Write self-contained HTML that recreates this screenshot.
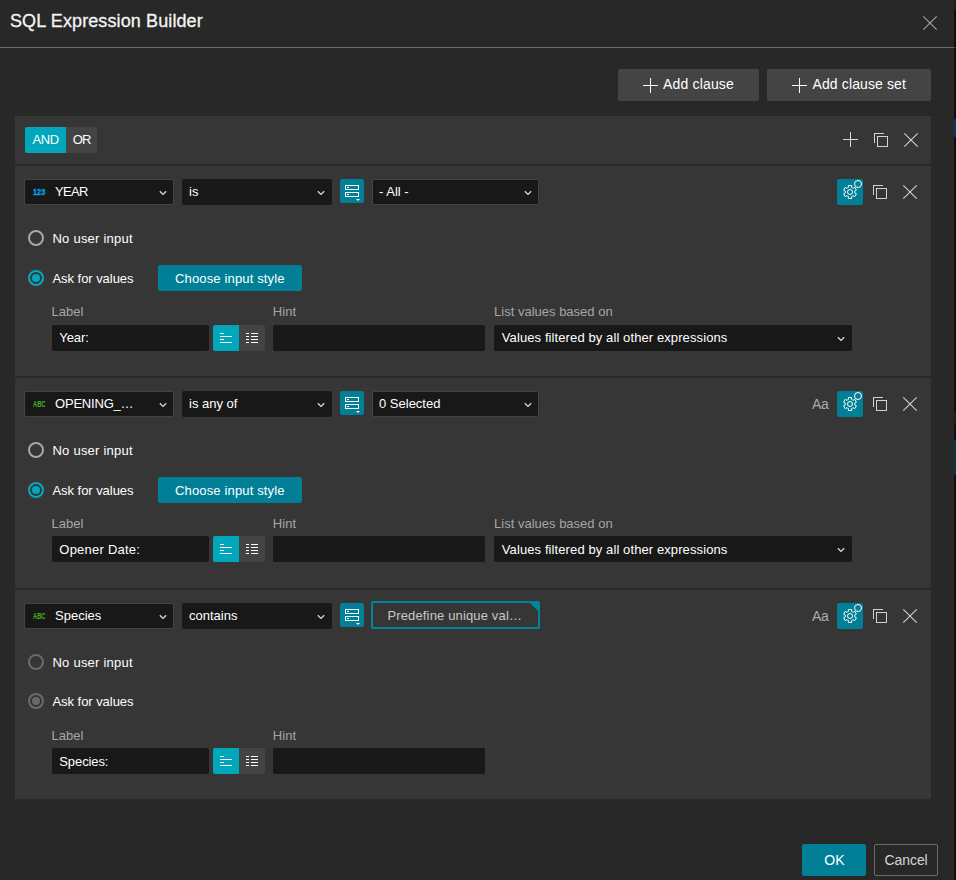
<!DOCTYPE html>
<html lang="en"><head><meta charset="utf-8"><title>SQL Expression Builder</title>
<style>
html,body{margin:0;padding:0}
body{width:956px;height:880px;position:relative;overflow:hidden;background:#151515;font-family:"Liberation Sans",sans-serif}
.b{position:absolute;box-sizing:content-box}
.t{position:absolute;white-space:nowrap}
.i{position:absolute;overflow:visible}
</style></head><body>
<div class="b" style="left:0px;top:0px;width:954px;height:880px;background:#282828;"></div>
<div class="b" style="left:954px;top:0px;width:2px;height:880px;background:#0f0f0f;"></div>
<div class="b" style="left:954px;top:0px;width:2px;height:10px;background:#1e1e1e;"></div>
<div class="b" style="left:954px;top:47px;width:2px;height:1px;background:#3a3a3a;"></div>
<div class="b" style="left:954px;top:119px;width:2px;height:18px;background:#003a5c;"></div>
<div class="b" style="left:954px;top:412px;width:2px;height:13px;background:#1c1c1c;"></div>
<div class="b" style="left:954px;top:440px;width:2px;height:35px;background:#0a3640;"></div>
<div class="t" style="left:10px;top:10px;font-size:18px;line-height:22px;color:#f4f4f4;letter-spacing:0.11px;-webkit-text-stroke:0.3px #f4f4f4;">SQL Expression Builder</div>
<svg class="i" style="left:923px;top:16px" width="14" height="14" viewBox="0 0 14 14"><path d="M0.3 0.3 L13.7 13.7 M13.7 0.3 L0.3 13.7" fill="none" stroke="#a6a6a6" stroke-width="1.1"/></svg>
<div class="b" style="left:0px;top:47px;width:954px;height:1px;background:#6a6a6a;"></div>
<div class="b" style="left:618px;top:69px;width:141px;height:32px;background:#444;border-radius:2px;"></div>
<svg class="i" style="left:643px;top:78px" width="15" height="15" viewBox="0 0 15 15" shape-rendering="crispEdges"><path d="M0 7.5 H15 M7.5 0 V15" fill="none" stroke="#fff" stroke-width="1"/></svg>
<div class="t" style="left:663px;top:75px;font-size:14px;line-height:18px;color:#fff;letter-spacing:0.17px;">Add clause</div>
<div class="b" style="left:767px;top:69px;width:164px;height:32px;background:#444;border-radius:2px;"></div>
<svg class="i" style="left:792px;top:78px" width="15" height="15" viewBox="0 0 15 15" shape-rendering="crispEdges"><path d="M0 7.5 H15 M7.5 0 V15" fill="none" stroke="#fff" stroke-width="1"/></svg>
<div class="t" style="left:812.5px;top:75px;font-size:14px;line-height:18px;color:#fff;letter-spacing:0.12px;">Add clause set</div>
<div class="b" style="left:15px;top:116px;width:916px;height:683px;background:#363636;"></div>
<div class="b" style="left:25px;top:127px;width:41px;height:26px;background:#00a7bb;border-radius:2px 0 0 2px;"></div>
<div class="b" style="left:66px;top:127px;width:31px;height:26px;background:#444;border-radius:0 2px 2px 0;"></div>
<div class="t" style="left:32.4px;top:131px;font-size:13px;line-height:17px;color:#fff;letter-spacing:-0.4px;">AND</div>
<div class="t" style="left:72.8px;top:131px;font-size:13px;line-height:17px;color:#fff;letter-spacing:-0.9px;">OR</div>
<svg class="i" style="left:843px;top:132px" width="15" height="15" viewBox="0 0 15 15" shape-rendering="crispEdges"><path d="M0 7.5 H15 M7.5 0 V15" fill="none" stroke="#d8d8d8" stroke-width="1"/></svg>
<svg class="i" style="left:874px;top:133px" width="14" height="14" viewBox="0 0 14 14" shape-rendering="crispEdges"><path d="M0.5 10 V0.5 H10" fill="none" stroke="#d2d2d2" stroke-width="1"/><rect x="3.5" y="3.5" width="10" height="10" fill="none" stroke="#d2d2d2" stroke-width="1"/></svg>
<svg class="i" style="left:904px;top:133px" width="14" height="14" viewBox="0 0 14 14"><path d="M0.3 0.3 L13.7 13.7 M13.7 0.3 L0.3 13.7" fill="none" stroke="#d2d2d2" stroke-width="1.1"/></svg>
<div class="b" style="left:15px;top:164px;width:916px;height:2px;background:#2a2a2a;"></div>
<div class="b" style="left:24px;top:179px;width:148px;height:24px;background:#181818;border:1px solid #444;border-radius:2px;"></div>
<div class="t" style="left:33px;top:187.09px;font-size:33.6px;line-height:40px;font-weight:700;color:#00a3ea;-webkit-text-stroke:1.2px #00a3ea;transform:scale(0.2200,0.25);transform-origin:0 0">123</div>
<div class="t" style="left:55px;top:183px;font-size:13px;line-height:17px;color:#fff;letter-spacing:-0.7px;">YEAR</div>
<svg class="i" style="left:159px;top:190.2px" width="8" height="6" viewBox="0 0 8 6"><path d="M0.8 1.2 L4 4.4 L7.2 1.2" fill="none" stroke="#dcdcdc" stroke-width="1.25"/></svg>
<div class="b" style="left:182px;top:179px;width:150px;height:26px;background:#181818;border-radius:2px;"></div>
<div class="t" style="left:189px;top:183px;font-size:13px;line-height:17px;color:#fff;">is</div>
<svg class="i" style="left:317px;top:190.2px" width="8" height="6" viewBox="0 0 8 6"><path d="M0.8 1.2 L4 4.4 L7.2 1.2" fill="none" stroke="#dcdcdc" stroke-width="1.25"/></svg>
<div class="b" style="left:340px;top:179px;width:24px;height:24px;background:#007f97;border-radius:2px"></div>
<svg class="i" style="left:340px;top:179px" width="24" height="24" viewBox="0 0 24 24" shape-rendering="crispEdges"><rect x="5.5" y="6.5" width="13" height="4" fill="none" stroke="#fff"/><rect x="5.5" y="13.5" width="13" height="4" fill="none" stroke="#fff"/><path d="M7 8.5 H9 M7 15.5 H9" stroke="#fff"/><path d="M16 20 H20 L18 22 Z" fill="#fff" shape-rendering="auto"/></svg>
<div class="b" style="left:372px;top:179px;width:165px;height:24px;background:#181818;border:1px solid #444;border-radius:2px;"></div>
<div class="t" style="left:379px;top:183px;font-size:13px;line-height:17px;color:#fff;">- All -</div>
<svg class="i" style="left:524px;top:190.2px" width="8" height="6" viewBox="0 0 8 6"><path d="M0.8 1.2 L4 4.4 L7.2 1.2" fill="none" stroke="#dcdcdc" stroke-width="1.25"/></svg>
<div class="b" style="left:837px;top:179px;width:26px;height:26px;background:#007f97;border-radius:2px"></div>
<svg class="i" style="left:837px;top:179px" width="26" height="26" viewBox="0 0 26 26"><path d="M11.40 8.47 L11.40 6.50 L14.60 6.50 L14.60 8.47 A4.8 4.8 0 0 1 16.12 9.35 L17.83 8.36 L19.43 11.14 L17.72 12.12 A4.8 4.8 0 0 1 17.72 13.88 L19.43 14.86 L17.83 17.64 L16.12 16.65 A4.8 4.8 0 0 1 14.60 17.53 L14.60 19.50 L11.40 19.50 L11.40 17.53 A4.8 4.8 0 0 1 9.88 16.65 L8.17 17.64 L6.57 14.86 L8.28 13.88 A4.8 4.8 0 0 1 8.28 12.12 L6.57 11.14 L8.17 8.36 L9.88 9.35 A4.8 4.8 0 0 1 11.40 8.47 Z" fill="none" stroke="#fff" stroke-width="1" stroke-linejoin="miter"/><circle cx="13" cy="13" r="2.5" fill="none" stroke="#fff" stroke-width="1"/><circle cx="21" cy="5" r="3.5" fill="#007f97" stroke="#fff" stroke-width="1"/></svg>
<svg class="i" style="left:873px;top:185px" width="14" height="14" viewBox="0 0 14 14" shape-rendering="crispEdges"><path d="M0.5 10 V0.5 H10" fill="none" stroke="#d2d2d2" stroke-width="1"/><rect x="3.5" y="3.5" width="10" height="10" fill="none" stroke="#d2d2d2" stroke-width="1"/></svg>
<svg class="i" style="left:903px;top:185px" width="14" height="14" viewBox="0 0 14 14"><path d="M0.3 0.3 L13.7 13.7 M13.7 0.3 L0.3 13.7" fill="none" stroke="#d2d2d2" stroke-width="1.1"/></svg>
<div class="b" style="left:28px;top:230px;width:12px;height:12px;border:2px solid #a8a8a8;border-radius:50%;background:transparent"></div>
<div class="t" style="left:52.5px;top:230px;font-size:13px;line-height:17px;color:#fff;letter-spacing:0.23px;">No user input</div>
<div class="b" style="left:28px;top:270px;width:12px;height:12px;border:2px solid #00a9c0;border-radius:50%;background:transparent"><div style="position:absolute;left:2px;top:2px;width:8px;height:8px;border-radius:50%;background:#00a9c0"></div></div>
<div class="t" style="left:52.5px;top:270px;font-size:13px;line-height:17px;color:#fff;letter-spacing:-0.05px;">Ask for values</div>
<div class="b" style="left:158px;top:265px;width:144px;height:26px;background:#007f97;border-radius:2px;"></div>
<div class="t" style="left:175px;top:270px;font-size:13px;line-height:17px;color:#fff;letter-spacing:0.15px;">Choose input style</div>
<div class="t" style="left:51.5px;top:303px;font-size:13px;line-height:17px;color:#a6a6a6;">Label</div>
<div class="b" style="left:52px;top:325px;width:157px;height:26px;background:#181818;border-radius:2px;"></div>
<div class="t" style="left:59.3px;top:329px;font-size:13px;line-height:17px;color:#fff;letter-spacing:-0.1px;">Year:</div>
<div class="b" style="left:213px;top:325px;width:26px;height:26px;background:#00a7bb;border-radius:2px 0 0 2px;"></div>
<div class="b" style="left:239px;top:325px;width:26px;height:26px;background:#444;border-radius:0 2px 2px 0;"></div>
<svg class="i" style="left:213px;top:325px" width="52" height="26" viewBox="0 0 52 26" shape-rendering="crispEdges"><path d="M7 8.5 H11 M7 11.5 H19 M7 14.5 H11 M7 17.5 H19 M33 8.5 H36 M38 8.5 H45 M33 11.5 H36 M38 11.5 H45 M33 14.5 H36 M38 14.5 H45 M33 17.5 H36 M38 17.5 H45" stroke="#fff" stroke-width="1" fill="none"/></svg>
<div class="t" style="left:272.7px;top:303px;font-size:13px;line-height:17px;color:#a6a6a6;letter-spacing:0.14px;">Hint</div>
<div class="b" style="left:273px;top:325px;width:212px;height:26px;background:#181818;border-radius:2px;"></div>
<div class="t" style="left:494.1px;top:303px;font-size:13px;line-height:17px;color:#a6a6a6;">List values based on</div>
<div class="b" style="left:494px;top:325px;width:358px;height:26px;background:#181818;border-radius:2px;"></div>
<div class="t" style="left:501.8px;top:329px;font-size:13px;line-height:17px;color:#fff;letter-spacing:0.1px;">Values filtered by all other expressions</div>
<svg class="i" style="left:837px;top:336.2px" width="8" height="6" viewBox="0 0 8 6"><path d="M0.8 1.2 L4 4.4 L7.2 1.2" fill="none" stroke="#dcdcdc" stroke-width="1.25"/></svg>
<div class="b" style="left:15px;top:376px;width:916px;height:2px;background:#2a2a2a;"></div>
<div class="b" style="left:24px;top:391px;width:148px;height:24px;background:#181818;border:1px solid #444;border-radius:2px;"></div>
<div class="t" style="left:33px;top:399.09px;font-size:33.6px;line-height:40px;font-weight:700;color:#46b41e;-webkit-text-stroke:0px #46b41e;transform:scale(0.1725,0.25);transform-origin:0 0">ABC</div>
<div class="t" style="left:55px;top:395px;font-size:13px;line-height:17px;color:#fff;letter-spacing:-0.2px;">OPENING_…</div>
<svg class="i" style="left:159px;top:402.2px" width="8" height="6" viewBox="0 0 8 6"><path d="M0.8 1.2 L4 4.4 L7.2 1.2" fill="none" stroke="#dcdcdc" stroke-width="1.25"/></svg>
<div class="b" style="left:182px;top:391px;width:150px;height:26px;background:#181818;border-radius:2px;"></div>
<div class="t" style="left:189px;top:395px;font-size:13px;line-height:17px;color:#fff;">is any of</div>
<svg class="i" style="left:317px;top:402.2px" width="8" height="6" viewBox="0 0 8 6"><path d="M0.8 1.2 L4 4.4 L7.2 1.2" fill="none" stroke="#dcdcdc" stroke-width="1.25"/></svg>
<div class="b" style="left:340px;top:391px;width:24px;height:24px;background:#007f97;border-radius:2px"></div>
<svg class="i" style="left:340px;top:391px" width="24" height="24" viewBox="0 0 24 24" shape-rendering="crispEdges"><rect x="5.5" y="6.5" width="13" height="4" fill="none" stroke="#fff"/><rect x="5.5" y="13.5" width="13" height="4" fill="none" stroke="#fff"/><path d="M7 8.5 H9 M7 15.5 H9" stroke="#fff"/><path d="M16 20 H20 L18 22 Z" fill="#fff" shape-rendering="auto"/></svg>
<div class="b" style="left:372px;top:391px;width:165px;height:24px;background:#181818;border:1px solid #444;border-radius:2px;"></div>
<div class="t" style="left:379px;top:395px;font-size:13px;line-height:17px;color:#fff;">0 Selected</div>
<svg class="i" style="left:524px;top:402.2px" width="8" height="6" viewBox="0 0 8 6"><path d="M0.8 1.2 L4 4.4 L7.2 1.2" fill="none" stroke="#dcdcdc" stroke-width="1.25"/></svg>
<div class="t" style="left:812px;top:395px;font-size:14px;line-height:18px;color:#ababab;letter-spacing:-0.26px;">Aa</div>
<div class="b" style="left:837px;top:391px;width:26px;height:26px;background:#007f97;border-radius:2px"></div>
<svg class="i" style="left:837px;top:391px" width="26" height="26" viewBox="0 0 26 26"><path d="M11.40 8.47 L11.40 6.50 L14.60 6.50 L14.60 8.47 A4.8 4.8 0 0 1 16.12 9.35 L17.83 8.36 L19.43 11.14 L17.72 12.12 A4.8 4.8 0 0 1 17.72 13.88 L19.43 14.86 L17.83 17.64 L16.12 16.65 A4.8 4.8 0 0 1 14.60 17.53 L14.60 19.50 L11.40 19.50 L11.40 17.53 A4.8 4.8 0 0 1 9.88 16.65 L8.17 17.64 L6.57 14.86 L8.28 13.88 A4.8 4.8 0 0 1 8.28 12.12 L6.57 11.14 L8.17 8.36 L9.88 9.35 A4.8 4.8 0 0 1 11.40 8.47 Z" fill="none" stroke="#fff" stroke-width="1" stroke-linejoin="miter"/><circle cx="13" cy="13" r="2.5" fill="none" stroke="#fff" stroke-width="1"/><circle cx="21" cy="5" r="3.5" fill="#007f97" stroke="#fff" stroke-width="1"/></svg>
<svg class="i" style="left:873px;top:397px" width="14" height="14" viewBox="0 0 14 14" shape-rendering="crispEdges"><path d="M0.5 10 V0.5 H10" fill="none" stroke="#d2d2d2" stroke-width="1"/><rect x="3.5" y="3.5" width="10" height="10" fill="none" stroke="#d2d2d2" stroke-width="1"/></svg>
<svg class="i" style="left:903px;top:397px" width="14" height="14" viewBox="0 0 14 14"><path d="M0.3 0.3 L13.7 13.7 M13.7 0.3 L0.3 13.7" fill="none" stroke="#d2d2d2" stroke-width="1.1"/></svg>
<div class="b" style="left:28px;top:442px;width:12px;height:12px;border:2px solid #a8a8a8;border-radius:50%;background:transparent"></div>
<div class="t" style="left:52.5px;top:442px;font-size:13px;line-height:17px;color:#fff;letter-spacing:0.23px;">No user input</div>
<div class="b" style="left:28px;top:482px;width:12px;height:12px;border:2px solid #00a9c0;border-radius:50%;background:transparent"><div style="position:absolute;left:2px;top:2px;width:8px;height:8px;border-radius:50%;background:#00a9c0"></div></div>
<div class="t" style="left:52.5px;top:482px;font-size:13px;line-height:17px;color:#fff;letter-spacing:-0.05px;">Ask for values</div>
<div class="b" style="left:158px;top:477px;width:144px;height:26px;background:#007f97;border-radius:2px;"></div>
<div class="t" style="left:175px;top:482px;font-size:13px;line-height:17px;color:#fff;letter-spacing:0.15px;">Choose input style</div>
<div class="t" style="left:51.5px;top:515px;font-size:13px;line-height:17px;color:#a6a6a6;">Label</div>
<div class="b" style="left:52px;top:536px;width:157px;height:26px;background:#181818;border-radius:2px;"></div>
<div class="t" style="left:59.3px;top:541px;font-size:13px;line-height:17px;color:#fff;letter-spacing:0.23px;">Opener Date:</div>
<div class="b" style="left:213px;top:536px;width:26px;height:26px;background:#00a7bb;border-radius:2px 0 0 2px;"></div>
<div class="b" style="left:239px;top:536px;width:26px;height:26px;background:#444;border-radius:0 2px 2px 0;"></div>
<svg class="i" style="left:213px;top:536px" width="52" height="26" viewBox="0 0 52 26" shape-rendering="crispEdges"><path d="M7 8.5 H11 M7 11.5 H19 M7 14.5 H11 M7 17.5 H19 M33 8.5 H36 M38 8.5 H45 M33 11.5 H36 M38 11.5 H45 M33 14.5 H36 M38 14.5 H45 M33 17.5 H36 M38 17.5 H45" stroke="#fff" stroke-width="1" fill="none"/></svg>
<div class="t" style="left:272.7px;top:515px;font-size:13px;line-height:17px;color:#a6a6a6;letter-spacing:0.14px;">Hint</div>
<div class="b" style="left:273px;top:536px;width:212px;height:26px;background:#181818;border-radius:2px;"></div>
<div class="t" style="left:494.1px;top:515px;font-size:13px;line-height:17px;color:#a6a6a6;">List values based on</div>
<div class="b" style="left:494px;top:536px;width:358px;height:26px;background:#181818;border-radius:2px;"></div>
<div class="t" style="left:501.8px;top:541px;font-size:13px;line-height:17px;color:#fff;letter-spacing:0.1px;">Values filtered by all other expressions</div>
<svg class="i" style="left:837px;top:547.2px" width="8" height="6" viewBox="0 0 8 6"><path d="M0.8 1.2 L4 4.4 L7.2 1.2" fill="none" stroke="#dcdcdc" stroke-width="1.25"/></svg>
<div class="b" style="left:15px;top:588px;width:916px;height:2px;background:#2a2a2a;"></div>
<div class="b" style="left:24px;top:603px;width:148px;height:24px;background:#181818;border:1px solid #444;border-radius:2px;"></div>
<div class="t" style="left:33px;top:611.09px;font-size:33.6px;line-height:40px;font-weight:700;color:#46b41e;-webkit-text-stroke:0px #46b41e;transform:scale(0.1725,0.25);transform-origin:0 0">ABC</div>
<div class="t" style="left:55px;top:607px;font-size:13px;line-height:17px;color:#fff;">Species</div>
<svg class="i" style="left:159px;top:614.2px" width="8" height="6" viewBox="0 0 8 6"><path d="M0.8 1.2 L4 4.4 L7.2 1.2" fill="none" stroke="#dcdcdc" stroke-width="1.25"/></svg>
<div class="b" style="left:182px;top:603px;width:150px;height:26px;background:#181818;border-radius:2px;"></div>
<div class="t" style="left:189px;top:607px;font-size:13px;line-height:17px;color:#fff;">contains</div>
<svg class="i" style="left:317px;top:614.2px" width="8" height="6" viewBox="0 0 8 6"><path d="M0.8 1.2 L4 4.4 L7.2 1.2" fill="none" stroke="#dcdcdc" stroke-width="1.25"/></svg>
<div class="b" style="left:340px;top:603px;width:24px;height:24px;background:#007f97;border-radius:2px"></div>
<svg class="i" style="left:340px;top:603px" width="24" height="24" viewBox="0 0 24 24" shape-rendering="crispEdges"><rect x="5.5" y="6.5" width="13" height="4" fill="none" stroke="#fff"/><rect x="5.5" y="13.5" width="13" height="4" fill="none" stroke="#fff"/><path d="M7 8.5 H9 M7 15.5 H9" stroke="#fff"/><path d="M16 20 H20 L18 22 Z" fill="#fff" shape-rendering="auto"/></svg>
<div class="b" style="left:371px;top:601px;width:165px;height:24px;border:2px solid #00839b;border-radius:2px;background:#363636"><div style="position:absolute;right:0;top:0;width:0;height:0;border-top:8px solid #00839b;border-left:8px solid transparent"></div></div>
<div class="t" style="left:387.4px;top:607px;font-size:13px;line-height:17px;color:#c8c8c8;letter-spacing:0.15px;">Predefine unique val…</div>
<div class="t" style="left:812px;top:607px;font-size:14px;line-height:18px;color:#ababab;letter-spacing:-0.26px;">Aa</div>
<div class="b" style="left:837px;top:603px;width:26px;height:26px;background:#007f97;border-radius:2px"></div>
<svg class="i" style="left:837px;top:603px" width="26" height="26" viewBox="0 0 26 26"><path d="M11.40 8.47 L11.40 6.50 L14.60 6.50 L14.60 8.47 A4.8 4.8 0 0 1 16.12 9.35 L17.83 8.36 L19.43 11.14 L17.72 12.12 A4.8 4.8 0 0 1 17.72 13.88 L19.43 14.86 L17.83 17.64 L16.12 16.65 A4.8 4.8 0 0 1 14.60 17.53 L14.60 19.50 L11.40 19.50 L11.40 17.53 A4.8 4.8 0 0 1 9.88 16.65 L8.17 17.64 L6.57 14.86 L8.28 13.88 A4.8 4.8 0 0 1 8.28 12.12 L6.57 11.14 L8.17 8.36 L9.88 9.35 A4.8 4.8 0 0 1 11.40 8.47 Z" fill="none" stroke="#fff" stroke-width="1" stroke-linejoin="miter"/><circle cx="13" cy="13" r="2.5" fill="none" stroke="#fff" stroke-width="1"/><circle cx="21" cy="5" r="3.5" fill="#007f97" stroke="#fff" stroke-width="1"/></svg>
<svg class="i" style="left:873px;top:609px" width="14" height="14" viewBox="0 0 14 14" shape-rendering="crispEdges"><path d="M0.5 10 V0.5 H10" fill="none" stroke="#d2d2d2" stroke-width="1"/><rect x="3.5" y="3.5" width="10" height="10" fill="none" stroke="#d2d2d2" stroke-width="1"/></svg>
<svg class="i" style="left:903px;top:609px" width="14" height="14" viewBox="0 0 14 14"><path d="M0.3 0.3 L13.7 13.7 M13.7 0.3 L0.3 13.7" fill="none" stroke="#d2d2d2" stroke-width="1.1"/></svg>
<div class="b" style="left:28px;top:654px;width:12px;height:12px;border:2px solid #6a6a6a;border-radius:50%;background:transparent"></div>
<div class="t" style="left:52.5px;top:654px;font-size:13px;line-height:17px;color:#fff;letter-spacing:0.23px;">No user input</div>
<div class="b" style="left:28px;top:693px;width:12px;height:12px;border:2px solid #6a6a6a;border-radius:50%;background:transparent"><div style="position:absolute;left:2px;top:2px;width:8px;height:8px;border-radius:50%;background:#6a6a6a"></div></div>
<div class="t" style="left:52.5px;top:693px;font-size:13px;line-height:17px;color:#fff;letter-spacing:-0.05px;">Ask for values</div>
<div class="t" style="left:51.5px;top:727px;font-size:13px;line-height:17px;color:#a6a6a6;">Label</div>
<div class="b" style="left:52px;top:748px;width:157px;height:26px;background:#181818;border-radius:2px;"></div>
<div class="t" style="left:59.3px;top:753px;font-size:13px;line-height:17px;color:#fff;letter-spacing:-0.1px;">Species:</div>
<div class="b" style="left:213px;top:748px;width:26px;height:26px;background:#00a7bb;border-radius:2px 0 0 2px;"></div>
<div class="b" style="left:239px;top:748px;width:26px;height:26px;background:#444;border-radius:0 2px 2px 0;"></div>
<svg class="i" style="left:213px;top:748px" width="52" height="26" viewBox="0 0 52 26" shape-rendering="crispEdges"><path d="M7 8.5 H11 M7 11.5 H19 M7 14.5 H11 M7 17.5 H19 M33 8.5 H36 M38 8.5 H45 M33 11.5 H36 M38 11.5 H45 M33 14.5 H36 M38 14.5 H45 M33 17.5 H36 M38 17.5 H45" stroke="#fff" stroke-width="1" fill="none"/></svg>
<div class="t" style="left:272.7px;top:727px;font-size:13px;line-height:17px;color:#a6a6a6;letter-spacing:0.14px;">Hint</div>
<div class="b" style="left:273px;top:748px;width:212px;height:26px;background:#181818;border-radius:2px;"></div>
<div class="b" style="left:802px;top:844px;width:64px;height:32px;background:#007f97;border-radius:2px;"></div>
<div class="t" style="left:824.3px;top:851px;font-size:14px;line-height:18px;color:#fff;">OK</div>
<div class="b" style="left:874px;top:844px;width:62px;height:30px;background:transparent;border:1px solid #6a6a6a;border-radius:2px;"></div>
<div class="t" style="left:884.6px;top:851px;font-size:14px;line-height:18px;color:#d6d6d6;letter-spacing:-0.09px;">Cancel</div>
</body></html>
